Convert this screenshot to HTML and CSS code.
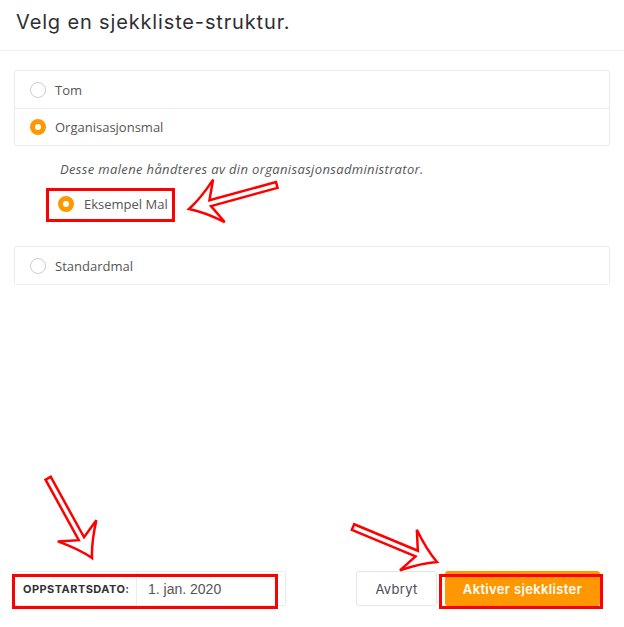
FILE: index.html
```html
<!DOCTYPE html>
<html lang="no">
<head>
<meta charset="utf-8">
<title>Velg en sjekkliste-struktur</title>
<link rel="stylesheet" href="styles.css">
</head>
<body>
<div class="page">
  <header class="head">
    <h1 class="title">Velg en sjekkliste-struktur.</h1>
  </header>
  <main class="content">
    <div class="options">
      <label class="row"><span class="radio"></span><span class="lbl">Tom</span></label>
      <label class="row"><span class="radio on"></span><span class="lbl">Organisasjonsmal</span></label>
    </div>
    <div class="sub">
      <p class="note">Desse malene håndteres av din organisasjonsadministrator.</p>
      <label class="sub-row"><span class="radio on"></span><span class="lbl">Eksempel Mal</span></label>
    </div>
    <div class="options">
      <label class="row"><span class="radio"></span><span class="lbl">Standardmal</span></label>
    </div>
  </main>
  <footer class="foot">
    <div class="dategroup">
      <span class="datelabel">OPPSTARTSDATO:</span>
      <span class="dateinput">1. jan. 2020</span>
    </div>
    <div class="actions">
      <button class="btn btn-cancel">Avbryt</button>
      <button class="btn btn-primary">Aktiver sjekklister</button>
    </div>
  </footer>
</div>

<div class="mark mark-sub"></div>
<div class="mark mark-date"></div>
<div class="mark mark-btn"></div>

<svg class="arrows" width="624" height="627" viewBox="0 0 624 627" aria-hidden="true">
  <defs>
    <path id="arw" d="M -91,-3 L -22,-3 L -31,-22 Q -14,-7 0,0 Q -14,7 -31,22 L -22,3 L -91,3 Z"/>
  </defs>
  <use href="#arw" transform="translate(189 209) rotate(164.7)"/>
  <use href="#arw" transform="translate(92 558) rotate(61.2)"/>
  <use href="#arw" transform="translate(437 562) rotate(22.6)"/>
</svg>
</body>
</html>
```

FILE: styles.css
```css
* { box-sizing: border-box; }
html, body { margin: 0; padding: 0; background: #fff; }
body { font-family: "Open Sans", "Noto Sans", sans-serif; color: #555; }

.page {
  min-height: 627px;
  display: flex;
  flex-direction: column;
}

.head {
  height: 51px;
  border-bottom: 1px solid #f2f2f2;
  padding: 0 16px;
  display: flex;
  align-items: center;
}
.title {
  margin: 0;
  font-family: "Inter", "Lato", sans-serif;
  font-weight: 400;
  font-size: 20px;
  letter-spacing: 0.85px;
  color: #2f2f33;
  position: relative;
  top: -3px;
}

.content {
  flex: 1;
  padding: 19px 14px 0 14px;
}

.options {
  border: 1px solid #ededed;
  border-radius: 2px;
}
.row {
  height: 37px;
  display: flex;
  align-items: center;
  padding-left: 15px;
}
.row + .row { border-top: 1px solid #ededed; }

.radio {
  width: 16px;
  height: 16px;
  border-radius: 50%;
  border: 1px solid #cfcfcf;
  background: #fff;
  flex: none;
}
.radio.on {
  border: 5px solid #ff9800;
}
.lbl {
  margin-left: 9px;
  font-size: 13px;
  color: #555;
}

.sub {
  padding: 14px 0 25px 32px;
}
.note {
  margin: 0 0 0 14px;
  font-style: italic;
  font-size: 13px;
  letter-spacing: 0.35px;
  line-height: 18px;
  color: #555;
}
.sub-row {
  margin-top: 9px;
  height: 34px;
  display: flex;
  align-items: center;
  padding-left: 12px;
}
.sub-row .lbl { margin-left: 10px; }

.foot {
  display: flex;
  justify-content: space-between;
  align-items: center;
  padding: 0 24px 21px 14px;
}
.dategroup {
  display: flex;
  height: 35px;
  border: 1px solid #ededed;
  border-radius: 2px;
}
.datelabel {
  display: flex;
  align-items: center;
  padding: 0 7px 0 8px;
  font-family: "Inter", sans-serif;
  font-weight: 700;
  font-size: 11px;
  letter-spacing: 0.45px;
  color: #333;
  border-right: 1px solid #ededed;
  width: 122px;
}
.dateinput {
  display: flex;
  align-items: center;
  width: 148px;
  padding-left: 11px;
  font-family: "Liberation Sans", Arial, sans-serif;
  font-size: 14px;
  color: #555;
}

.actions { display: flex; gap: 8px; }
.btn {
  height: 35px;
  border-radius: 3px;
  font-family: "Inter", sans-serif;
  font-size: 13px;
  cursor: pointer;
}
.btn-cancel {
  width: 81px;
  background: #fff;
  border: 1px solid #e6e6e6;
  color: #4a4a55;
  font-weight: 400;
  letter-spacing: 0.3px;
}
.btn-primary {
  width: 155px;
  background: #ff9800;
  border: none;
  color: #fff;
  font-weight: 600;
  letter-spacing: 0.35px;
}

.mark {
  position: absolute;
  border: 3px solid #f00;
  pointer-events: none;
}
.mark-sub { left: 46px; top: 188px; width: 129px; height: 34px; }
.mark-date { left: 12px; top: 574px; width: 266px; height: 35px; }
.mark-btn { left: 439px; top: 574px; width: 164px; height: 35px; }

.arrows {
  position: absolute;
  left: 0;
  top: 0;
  pointer-events: none;
  fill: #fff;
  stroke: #f00;
  stroke-width: 2.5;
  stroke-linejoin: miter;
}
```
